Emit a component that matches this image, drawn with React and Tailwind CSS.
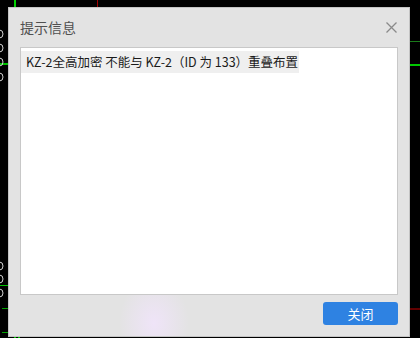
import React from "react";

const font = { fontFamily: '"Noto Sans CJK SC", "Noto Sans", sans-serif' };

// bits of the cad drawing that show around the window
function Canvas() {
  return (
    <svg className="absolute inset-0" width="420" height="338" viewBox="0 0 420 338">
      <rect x="14" y="0" width="2" height="7" fill="#00d000" />
      <rect x="97" y="0" width="1" height="7" fill="#a00000" />
      <rect x="0" y="63" width="8" height="2" fill="#00c000" />
      <rect x="0" y="285" width="8" height="1" fill="#00c000" />
      <rect x="2" y="308" width="6" height="1" fill="#00a000" />
      <rect x="2" y="332" width="6" height="1" fill="#00a000" />
      <rect x="14" y="337" width="2" height="1" fill="#00c000" />
      <rect x="18" y="337" width="2" height="1" fill="#00c000" />
      <rect x="410" y="41" width="10" height="1" fill="#1a7a1a" />
      <rect x="410" y="64" width="10" height="2" fill="#00c800" />
      <rect x="410" y="308" width="10" height="2" fill="#600000" />
      {[34, 48, 62, 77, 266, 279, 293].map((y) => (
        <ellipse key={y} cx="-0.5" cy={y} rx="3.5" ry="4" fill="none" stroke="#d0d0d0" strokeWidth="1" />
      ))}
    </svg>
  );
}

function App() {
  return (
    <div className="relative w-[420px] h-[338px] bg-black overflow-hidden pt-[7px] pl-[8px]" style={font}>
      <Canvas />
      <div className="relative w-[402px] h-[330px] border border-[#c4c4c4] bg-[#e3e3e3] flex flex-col bg-[radial-gradient(ellipse_35px_45px_at_145px_315px,#efe4f8,transparent)]">
        <div className="h-[39px] flex items-center justify-between pl-[11px] pr-[12px] pb-[1px]">
          <span className="text-[14px] text-[#505050]">提示信息</span>
          <svg width="11" height="11" viewBox="0 0 11 11">
            <path d="M0.5 0.5L10.5 10.5M10.5 0.5L0.5 10.5" stroke="#8a8a8a" strokeWidth="1.3" />
          </svg>
        </div>
        <div className="mx-[11px] h-[248px] border border-[#c8c8c8] bg-white">
          <span className="inline-block bg-[#efefef] pl-[5px] pr-[1px] h-[22px] leading-[22px] text-[12.5px] text-[#1a1a1a]">
            KZ-2全高加密 不能与 KZ-2（ID 为 133）重叠布置
          </span>
        </div>
        <div className="flex justify-end px-[11px] pt-[7px]">
          <button className="w-[75px] h-[23px] rounded-[3px] bg-[#2e82e2] text-white text-[13px] leading-[23px]">
            关闭
          </button>
        </div>
      </div>
    </div>
  );
}

export default App;
